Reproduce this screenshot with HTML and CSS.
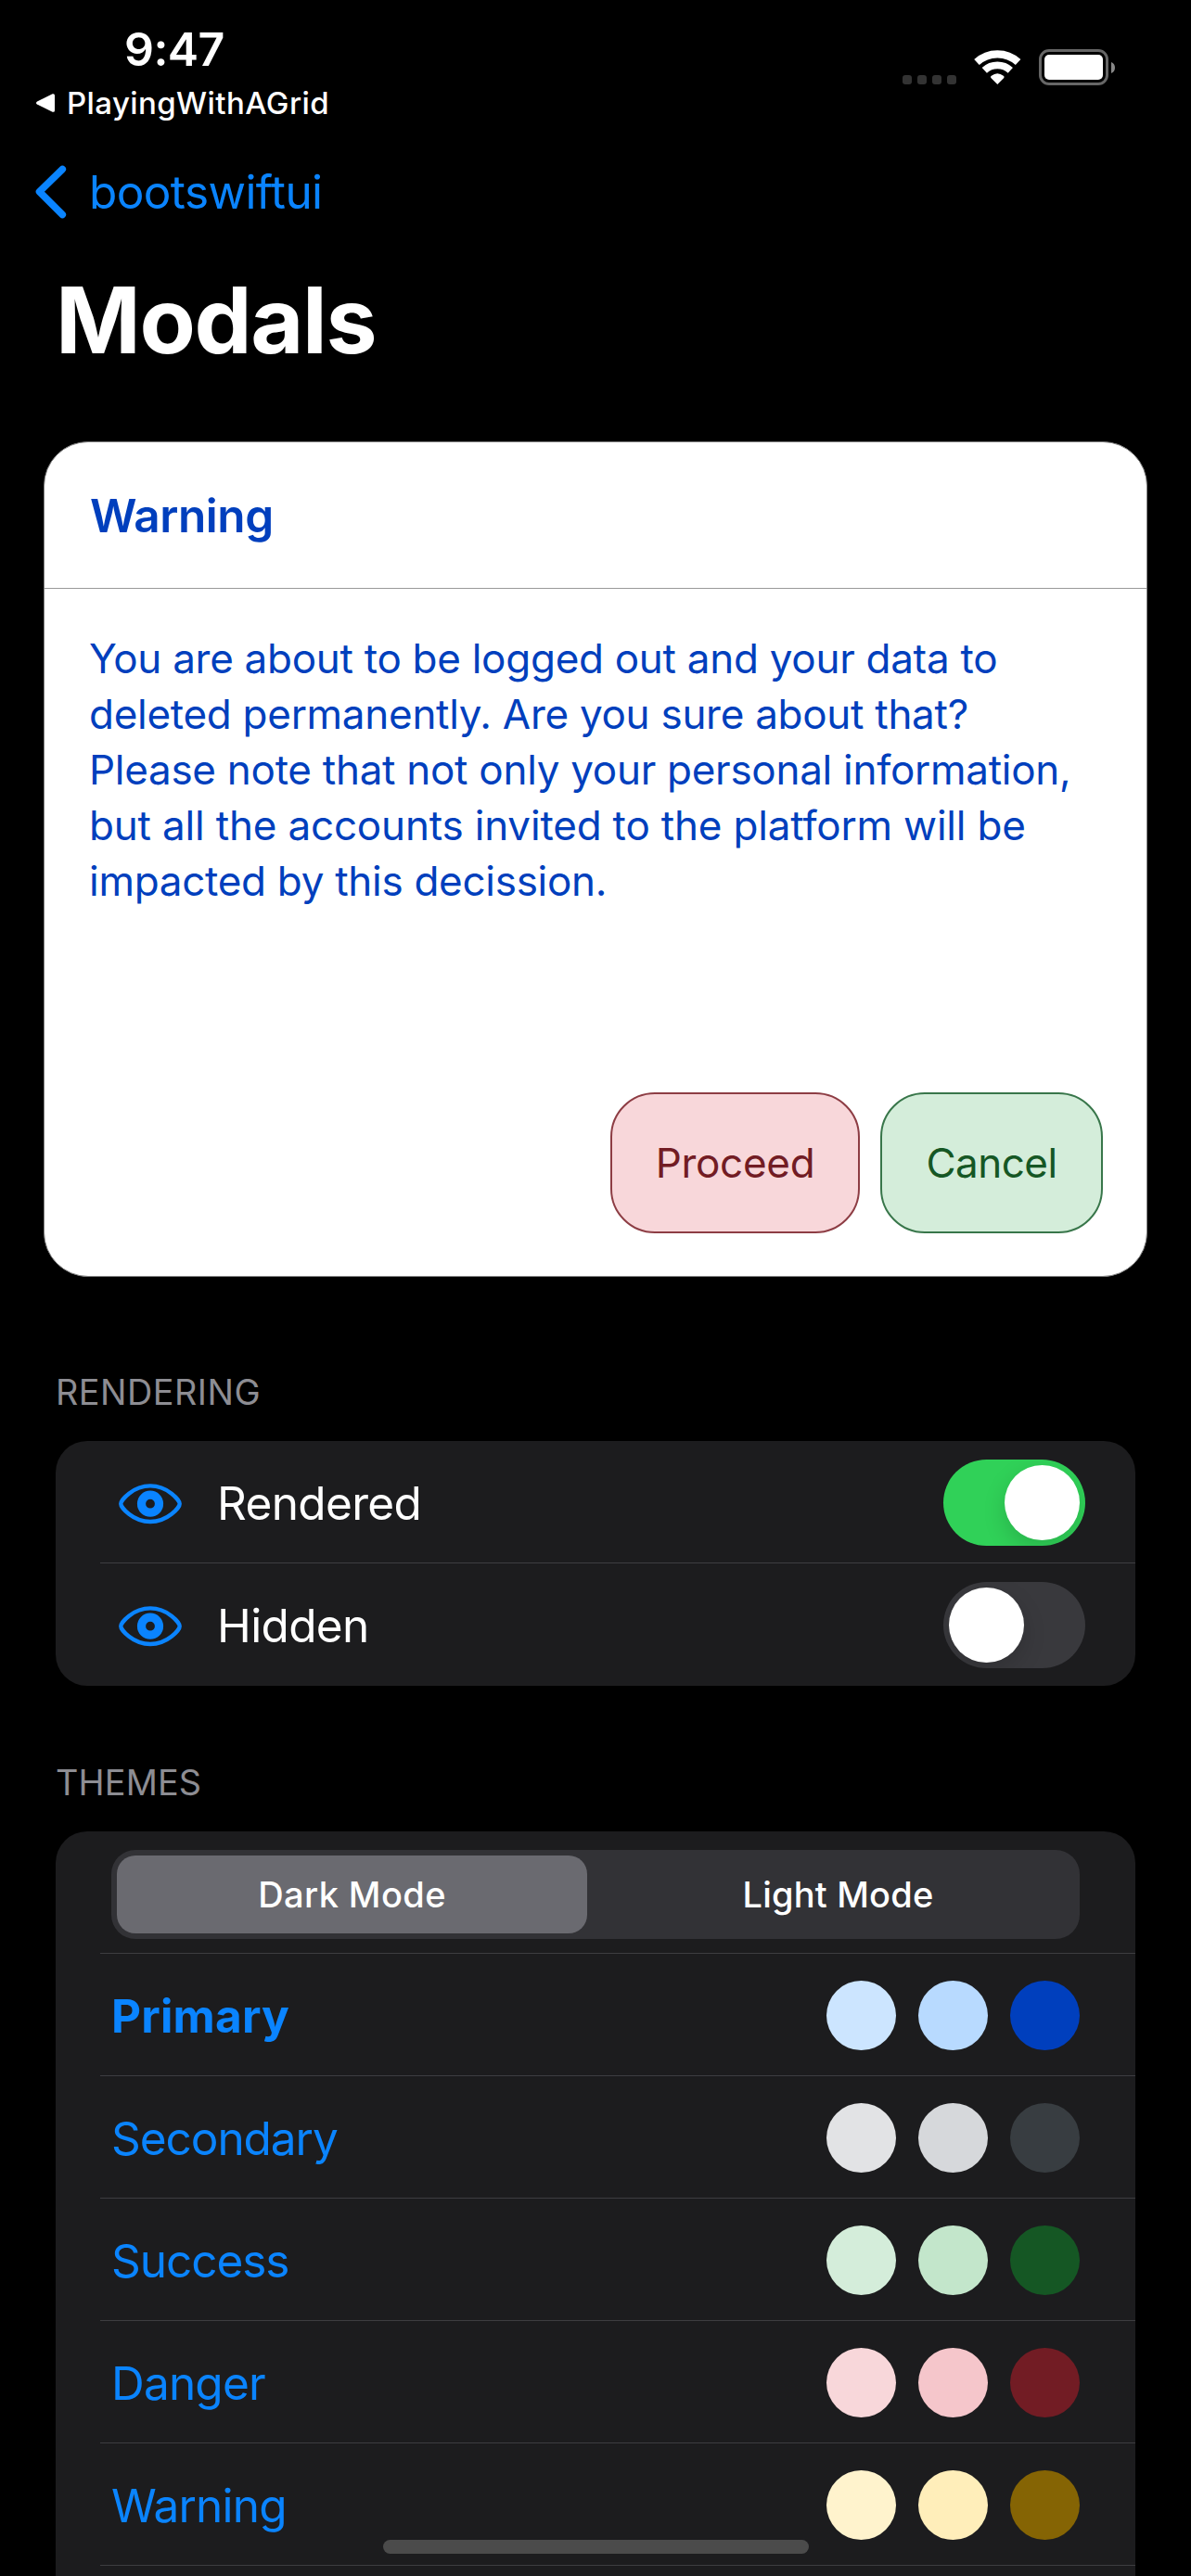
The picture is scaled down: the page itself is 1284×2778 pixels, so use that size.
FILE: index.html
```html
<!DOCTYPE html>
<html lang="en">
<head>
<meta charset="utf-8">
<title>Modals</title>
<link rel="stylesheet" href="styles.css">
</head>
<body>
<header class="status">
  <div class="status-left">
    <div class="time">9:47</div>
    <div class="back-app">
      <svg class="back-app-icon" width="22" height="22" viewBox="0 0 22 22"><path d="M2 9.4 18.6 1.3Q21 .6 21 3V19Q21 21.4 18.6 20.7L2 12.6Q0 11 2 9.4Z" fill="#fff"/></svg>
      <span>PlayingWithAGrid</span>
    </div>
  </div>
  <svg class="status-right" width="229" height="40" viewBox="0 0 229 40">
    <g fill="#333">
      <rect x="0" y="28" width="10" height="10" rx="3"/>
      <rect x="16" y="28" width="10" height="10" rx="3"/>
      <rect x="32" y="28" width="10" height="10" rx="3"/>
      <rect x="48" y="28" width="10" height="10" rx="3"/>
    </g>
    <g fill="none" stroke="#fff">
      <path d="M80 14A33 33 0 0 1 124.600 14" stroke-width="8.200"/>
      <path d="M88.300 22.800A20.700 20.700 0 0 1 116.300 22.800" stroke-width="7.800"/>
    </g>
    <path d="M102.300 38 95.300 31Q94.400 29.800 95.800 28.800 102.300 23.600 108.800 28.800 110.200 29.800 109.300 31Z" fill="#fff"/>
    <rect x="148.500" y="1.500" width="72" height="36" rx="9.500" fill="none" stroke="#666" stroke-width="3"/>
    <rect x="153" y="6" width="63" height="27" rx="5" fill="#fff"/>
    <path d="M225 14Q229 15.500 229 20T225 26Z" fill="#888"/>
  </svg>
</header>

<nav class="nav">
  <svg class="chevron" width="34" height="58" viewBox="0 0 34 58"><path d="M29.300 4.500 4.500 28.800 29.300 53.500" fill="none" stroke="#0a84ff" stroke-width="7.600" stroke-linecap="round" stroke-linejoin="round"/></svg>
  <a class="nav-back">bootswiftui</a>
</nav>

<h1 class="title">Modals</h1>

<section class="modal">
  <h2 class="modal-title">Warning</h2>
  <p class="modal-text">
    <span class="line">You are about to be logged out and your data to</span>
    <span class="line">deleted permanently. Are you sure about that?</span>
    <span class="line">Please note that not only your personal information,</span>
    <span class="line line-wide">but all the accounts invited to the platform will be</span>
    <span class="line">impacted by this decission.</span>
  </p>
  <div class="modal-actions">
    <button class="btn btn-danger">Proceed</button>
    <button class="btn btn-success">Cancel</button>
  </div>
</section>

<h3 class="section-label section-rendering">Rendering</h3>
<ul class="panel">
  <li class="row">
    <svg class="eye" width="68" height="44" viewBox="0 0 68 44"><path d="M2.300 21.700C2.300 18 15 2.400 34 2.400S65.700 18 65.700 21.700 53 41 34 41 2.300 25.400 2.300 21.700Z" fill="none" stroke="#0a84ff" stroke-width="4.400"/><circle cx="34" cy="21.700" r="9.500" fill="none" stroke="#0a84ff" stroke-width="9.200"/></svg>
    <span class="row-label">Rendered</span>
    <span class="toggle toggle-on"><span class="knob"></span></span>
  </li>
  <li class="row">
    <svg class="eye" width="68" height="44" viewBox="0 0 68 44"><path d="M2.300 21.700C2.300 18 15 2.400 34 2.400S65.700 18 65.700 21.700 53 41 34 41 2.300 25.400 2.300 21.700Z" fill="none" stroke="#0a84ff" stroke-width="4.400"/><circle cx="34" cy="21.700" r="9.500" fill="none" stroke="#0a84ff" stroke-width="9.200"/></svg>
    <span class="row-label">Hidden</span>
    <span class="toggle"><span class="knob"></span></span>
  </li>
</ul>

<h3 class="section-label section-themes">Themes</h3>
<ul class="panel panel-themes">
  <li class="row row-segment">
    <div class="segment">
      <span class="segment-item selected">Dark Mode</span>
      <span class="segment-item">Light Mode</span>
    </div>
  </li>
  <li class="row theme"><span class="theme-name primary">Primary</span><span class="dots"><i class="dot p1"></i><i class="dot p2"></i><i class="dot p3"></i></span></li>
  <li class="row theme"><span class="theme-name">Secondary</span><span class="dots"><i class="dot s1"></i><i class="dot s2"></i><i class="dot s3"></i></span></li>
  <li class="row theme"><span class="theme-name">Success</span><span class="dots"><i class="dot g1"></i><i class="dot g2"></i><i class="dot g3"></i></span></li>
  <li class="row theme"><span class="theme-name danger">Danger</span><span class="dots"><i class="dot d1"></i><i class="dot d2"></i><i class="dot d3"></i></span></li>
  <li class="row theme"><span class="theme-name warning">Warning</span><span class="dots"><i class="dot w1"></i><i class="dot w2"></i><i class="dot w3"></i></span></li>
</ul>

<div class="home-indicator"></div>
</body>
</html>
```
FILE: styles.css
```css
* { box-sizing: border-box; margin: 0; padding: 0; }

body {
  width: 1284px;
  height: 2778px;
  overflow: hidden;
  background: #000;
  color: #fff;
  font-family: Inter, "Liberation Sans", sans-serif;
  font-size: 50px;
  display: flex;
  flex-direction: column;
}

body > * { flex-shrink: 0; }
ul { list-style: none; }

/* Status bar */
.status { display: flex; justify-content: space-between; height: 177px; padding: 24px 82px 0 38px; }
.time { padding-left: 96px; line-height: 58px; font-size: 50px; font-weight: 600; letter-spacing: -0.6px; }
.back-app { display: flex; align-items: center; gap: 12px; margin-top: 9px; font-size: 33px; font-weight: 450; line-height: 40px; letter-spacing: 0.4px; }
.status-right { margin-top: 29px; }

/* Navigation */
.nav { display: flex; align-items: center; height: 60px; padding-left: 38px; gap: 24px; color: #0a84ff; }
.nav-back { font-size: 49.5px; line-height: 60px; letter-spacing: -0.6px; }
.title { margin-top: 49px; padding-left: 60px; font-size: 98.5px; font-weight: 700; line-height: 120px; letter-spacing: -1.35px; }

/* Modal card */
.modal {
  display: flex;
  flex-direction: column;
  width: 1190px;
  height: 901px;
  margin: 70px 0 0 47px;
  border: 1px solid #808080;
  border-radius: 48px;
  background: #fff;
  color: #003fbd;
}
.modal-title { height: 158px; padding-left: 49px; border-bottom: 1px solid #999; font-size: 49.5px; font-weight: 600; line-height: 158px; letter-spacing: -0.45px; }
.modal-text { padding: 45px 0 0 48px; font-size: 44px; line-height: 60px; letter-spacing: -0.28px; }
.line { display: block; white-space: nowrap; }
.line-wide { letter-spacing: -0.18px; }
.modal-actions { display: flex; justify-content: flex-end; gap: 22px; margin-top: auto; padding: 0 47px 46px 0; }
.btn { height: 152px; border: 2px solid; border-radius: 48px; font: 400 44px Inter, "Liberation Sans", sans-serif; }
.btn-danger { width: 269px; background: #f8d7da; border-color: #8d3d44; color: #721c24; letter-spacing: -0.3px; }
.btn-success { width: 240px; background: #d4edda; border-color: #38764a; color: #155724; letter-spacing: -0.53px; }

/* Grouped lists */
.section-label { padding-left: 60px; color: #8d8d93; font-size: 37.8px; font-weight: 400; line-height: 46px; text-transform: uppercase; }
.section-rendering { margin-top: 101px; letter-spacing: 0.5px; }
.section-themes { margin-top: 81px; letter-spacing: 0.15px; }
.panel { width: 1164px; margin: 30px 0 0 60px; border-radius: 34px; background: #1c1c1e; overflow: hidden; }
.panel-themes { height: 840px; }
.row { display: flex; align-items: center; height: 132px; padding-top: 2px; background: linear-gradient(#3d3d41, #3d3d41) 48px 131px / 1116px 1px no-repeat; }
.panel:not(.panel-themes) .row:last-child { background: none; }
.eye { margin: 2px 38px 0 68px; }
.row-label { font-size: 49.5px; letter-spacing: -0.65px; }
.toggle { width: 153px; height: 93px; margin-left: auto; margin-right: 54px; margin-bottom: 2px; padding: 6px; border-radius: 47px; background: #39393d; overflow: hidden; }
.toggle-on { background: #30d158; }
.knob { display: block; width: 81px; height: 81px; border-radius: 50%; background: #fff; box-shadow: 0 9px 24px rgba(0, 0, 0, .15); }
.toggle-on .knob { margin-left: auto; }

/* Themes */
.row-segment { align-items: flex-start; padding: 20px 60px 0; }
.segment { display: flex; gap: 10px; width: 1044px; height: 96px; padding: 6px 0 6px 6px; border-radius: 26px; background: #323236; }
.segment-item { flex: 1; border-radius: 20px; font-size: 38px; font-weight: 450; line-height: 84px; text-align: center; letter-spacing: 0.18px; }
.segment-item.selected { flex: 0 0 507px; background: #6a6a70; font-weight: 550; letter-spacing: 0.4px; }
.theme { justify-content: space-between; padding-left: 60px; padding-right: 60px; color: #0a84ff; }
.theme-name { font-size: 49.5px; letter-spacing: -1.05px; }
.theme-name.primary { font-weight: 700; letter-spacing: 0.2px; }
.theme-name.danger { letter-spacing: -0.8px; }
.theme-name.warning { letter-spacing: -0.8px; }
.dots { display: flex; gap: 24px; margin-bottom: 2px; }
.dot { width: 75px; height: 75px; border-radius: 50%; }
.p1 { background: #cce5ff; }
.p2 { background: #b8daff; }
.p3 { background: #003fbd; }
.s1 { background: #e2e3e5; }
.s2 { background: #d6d8db; }
.s3 { background: #383d41; }
.g1 { background: #d4edda; }
.g2 { background: #c3e6cb; }
.g3 { background: #155724; }
.d1 { background: #f8d7da; }
.d2 { background: #f5c6cb; }
.d3 { background: #721c24; }
.w1 { background: #fff3cd; }
.w2 { background: #ffeeba; }
.w3 { background: #856404; }

/* Home indicator floats over the list */
.home-indicator { position: absolute; left: 413px; top: 2739px; width: 459px; height: 15px; border-radius: 8px; background: #4b4b4b; }
```
